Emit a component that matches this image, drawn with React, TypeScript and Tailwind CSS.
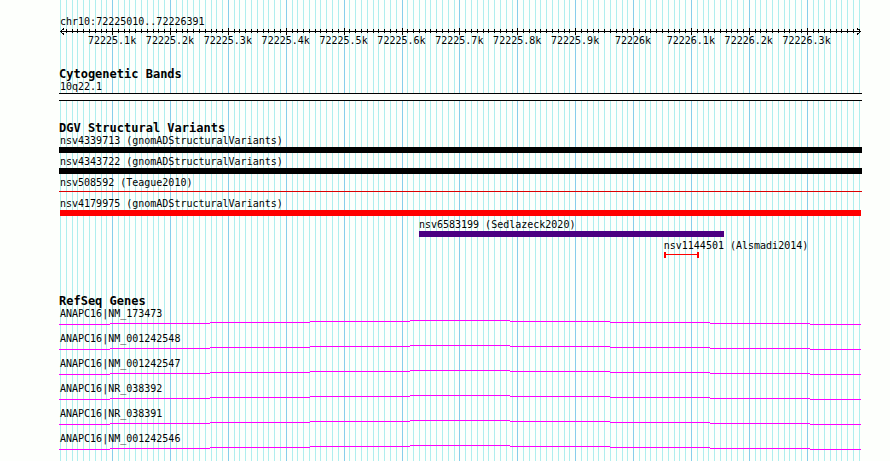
// Genome browser view of one region: ruler on top, then the annotation tracks.
// Everything is placed as a percentage of the region, so it scales with the page.

const REGION = { chrom: "chr10", start: 72225010, end: 72226391 };
const SPAN = REGION.end - REGION.start + 1;

const pct = (bases: number) => `${(bases / SPAN) * 100}%`;

const TICKS = Array.from({ length: Math.ceil(SPAN / 10) }, (_, i) => {
  const pos = REGION.start + i * 10;
  return { pos, major: pos % 100 === 0 };
});

const MAJOR = TICKS.filter((t) => t.major);

// Left edge of the first tick label cell, in bases from the region start.
const LABEL_OFFSET = MAJOR[0].pos - REGION.start - 50;

type Variant = {
  name: string;
  start: number;
  end: number;
  shape: "clipped" | "bar" | "line" | "range";
  color: string;
};

const VARIANTS: Variant[] = [
  { name: "nsv4339713 (gnomADStructuralVariants)", start: REGION.start, end: REGION.end, shape: "clipped", color: "bg-black" },
  { name: "nsv4343722 (gnomADStructuralVariants)", start: REGION.start, end: REGION.end, shape: "clipped", color: "bg-black" },
  { name: "nsv508592 (Teague2010)", start: REGION.start, end: REGION.end, shape: "line", color: "bg-[#dc0000]" },
  { name: "nsv4179975 (gnomADStructuralVariants)", start: REGION.start, end: REGION.end, shape: "bar", color: "bg-[#ff0000]" },
  { name: "nsv6583199 (Sedlazeck2020)", start: 72225630, end: 72226155, shape: "bar", color: "bg-[#4b0082]" },
  { name: "nsv1144501 (Alsmadi2014)", start: 72226053, end: 72226112, shape: "range", color: "bg-[#ff0000]" },
];

const GENES = [
  "ANAPC16|NM_173473",
  "ANAPC16|NM_001242548",
  "ANAPC16|NM_001242547",
  "ANAPC16|NR_038392",
  "ANAPC16|NR_038391",
  "ANAPC16|NM_001242546",
];

// Intron line: rises one pixel per step to the middle, then falls again.
const INTRON = [
  { x: 0, w: 6.25, y: 4 },
  { x: 6.25, w: 12.5, y: 3 },
  { x: 18.75, w: 12.5, y: 2 },
  { x: 31.25, w: 12.5, y: 1 },
  { x: 43.75, w: 12.5, y: 0 },
  { x: 56.25, w: 12.5, y: 1 },
  { x: 68.75, w: 12.5, y: 2 },
  { x: 81.25, w: 12.5, y: 3 },
  { x: 93.75, w: 6.25, y: 4 },
];

function GridLines() {
  return (
    <svg
      aria-hidden="true"
      className="absolute inset-0 h-full w-full overflow-visible"
      shapeRendering="crispEdges"
    >
      {TICKS.map((t) => (
        <rect
          key={t.pos}
          x={pct(t.pos - REGION.start)}
          width="1"
          height="100%"
          className={t.major ? "fill-[#87ceeb]" : "fill-[#afeeee]"}
        />
      ))}
    </svg>
  );
}

function Ruler() {
  return (
    <div>
      <div>
        {REGION.chrom}:{REGION.start}..{REGION.end}
      </div>
      <svg
        aria-hidden="true"
        className="block h-[7px] w-full overflow-visible"
        shapeRendering="crispEdges"
      >
        <rect y="3" width="100%" height="1" />
        {TICKS.slice(1).map((t) => (
          <rect
            key={t.pos}
            x={pct(t.pos - REGION.start)}
            y={t.major ? 0 : 1}
            width="1"
            height={t.major ? 7 : 4}
          />
        ))}
        <path d="M4 0.5 L0.5 3.5 L4 6.5" fill="none" stroke="black" />
        <svg x="100%" className="overflow-visible">
          <path d="M-3 0.5 L0.5 3.5 L-3 6.5" fill="none" stroke="black" />
        </svg>
      </svg>
      {/* One cell per major tick, centred on it */}
      <div className="flex" style={{ marginLeft: pct(LABEL_OFFSET) }}>
        {MAJOR.map((t) => (
          <div
            key={t.pos}
            className="flex shrink-0 justify-center"
            style={{ width: `${(100 / (SPAN - LABEL_OFFSET)) * 100}%` }}
          >
            {t.pos / 1000}k
          </div>
        ))}
      </div>
    </div>
  );
}

function Glyph({ shape, color }: Pick<Variant, "shape" | "color">) {
  if (shape === "clipped") return <div className={`-mr-0.5 -ml-px h-1.5 ${color}`} />;
  if (shape === "bar") return <div className={`-mr-px h-1.5 ${color}`} />;
  if (shape === "line") {
    return (
      <div className="-mr-0.5 -ml-px h-1.5 pt-0.5">
        <div className={`h-px ${color}`} />
      </div>
    );
  }
  return (
    <div className="-mr-px flex h-1.5">
      <div className={`w-0.5 ${color}`} />
      <div className="grow pt-0.5">
        <div className={`h-px ${color}`} />
      </div>
      <div className={`w-0.5 ${color}`} />
    </div>
  );
}

function TrackTitle({ children }: { children: string }) {
  return <h2 className="-ml-px text-[12px] leading-[14px] font-bold">{children}</h2>;
}

export default function App() {
  return (
    <div className="min-h-screen bg-[#fdfffc] pr-[30px] pl-[60px] font-['DejaVu_Sans_Mono','Liberation_Mono',monospace] text-[10px] leading-[12px] whitespace-nowrap text-black">
      <main className="relative min-h-screen pt-4">
        <GridLines />
        <div className="relative">
          <Ruler />

          <section className="mt-5">
            <TrackTitle>Cytogenetic Bands</TrackTitle>
            <div>10q22.1</div>
            <div className="-mr-0.5 -ml-px h-2 border-y border-black bg-[#fdfffc]" />
          </section>

          <section className="mt-5">
            <TrackTitle>DGV Structural Variants</TrackTitle>
            <div className="flex flex-col gap-[3px]">
              {VARIANTS.map((v) => (
                <div key={v.name} style={{ marginLeft: pct(v.start - REGION.start) }}>
                  <div>{v.name}</div>
                  <div style={{ width: `${((v.end - v.start + 1) / (REGION.end - v.start + 1)) * 100}%` }}>
                    <Glyph shape={v.shape} color={v.color} />
                  </div>
                </div>
              ))}
            </div>
          </section>

          <section className="mt-9">
            <TrackTitle>RefSeq Genes</TrackTitle>
            <div className="flex flex-col gap-2">
              {GENES.map((gene) => (
                <div key={gene}>
                  <div>{gene}</div>
                  <svg
                    aria-hidden="true"
                    className="block h-[5px] w-full overflow-visible fill-[#ff00ff]"
                    shapeRendering="crispEdges"
                  >
                    {/* The gene runs past both ends of the region */}
                    <rect x="-1" y="4" width="1" height="1" />
                    {INTRON.map((s) => (
                      <rect key={s.x} x={`${s.x}%`} y={s.y} width={`${s.w}%`} height="1" />
                    ))}
                    <rect x="100%" y="4" width="1" height="1" />
                  </svg>
                </div>
              ))}
            </div>
          </section>
        </div>
      </main>
    </div>
  );
}
